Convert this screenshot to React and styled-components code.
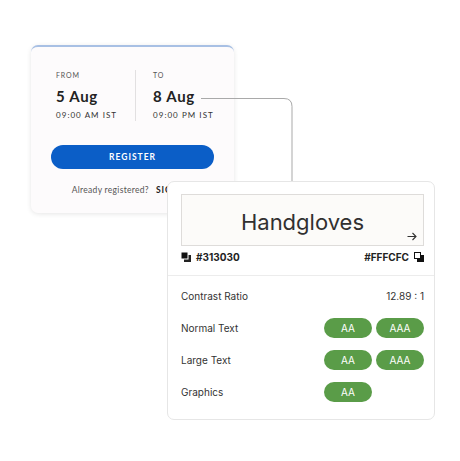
import React from 'react'
import styled, { createGlobalStyle } from 'styled-components'

const Global = createGlobalStyle`
  html, body { margin: 0; padding: 0; background: #ffffff; }
  * { box-sizing: border-box; }
`

const Stage = styled.div`
  position: relative;
  width: 460px;
  height: 461px;
  padding: 45px 0 0 31px;
  font-family: Lato, "Liberation Sans", sans-serif;
  color: #2b2b2b;
`

const EventCard = styled.div`
  width: 203px;
  height: 168px;
  background: #fdfbfc;
  border-top: 2px solid #a8c0e4;
  border-radius: 7px;
  box-shadow: 0 1px 5px rgba(0, 0, 0, 0.1);
  padding: 23px 20px 0 20px;
  display: flex;
  flex-direction: column;
`

const Dates = styled.div`
  display: flex;
  padding-left: 5px;
`

const DateCol = styled.div`
  display: flex;
  flex-direction: column;
  width: ${p => (p.$last ? 'auto' : '79px')};
  padding-left: ${p => (p.$last ? '17px' : '0')};
  border-left: ${p => (p.$last ? '1px solid #e2e0e1' : 'none')};
`

const Label = styled.span`
  font-size: 7px;
  line-height: 10px;
  letter-spacing: 0.9px;
  color: #555;
`

const Day = styled.span`
  margin-top: 7px;
  font-size: 15px;
  line-height: 18px;
  font-weight: 700;
  letter-spacing: 0.7px;
  color: #222;
`

const Time = styled.span`
  margin-top: 5px;
  font-size: 8px;
  line-height: 11px;
  letter-spacing: 1.05px;
  color: #333;
`

const Register = styled.button`
  margin-top: 24px;
  height: 24px;
  width: 163px;
  border: none;
  border-radius: 12px;
  background: #0b5ec7;
  color: #fff;
  font-family: inherit;
  font-size: 8.5px;
  font-weight: 700;
  letter-spacing: 1px;
`

const SignLine = styled.p`
  margin: 15px 0 0;
  text-align: center;
  font-size: 8.5px;
  line-height: 12px;
  color: #555;
  letter-spacing: 0.3px;
  b { margin-left: 7px; color: #222; letter-spacing: 0.9px; }
`

const Connector = styled.svg`
  position: absolute;
  left: 0;
  top: 0;
  pointer-events: none;
`

const ContrastCard = styled.div`
  position: absolute;
  left: 167px;
  top: 181px;
  width: 268px;
  height: 239px;
  background: #fff;
  border: 1px solid #e6e6e6;
  border-radius: 7px;
  font-family: Inter, "Liberation Sans", sans-serif;
  color: #333;
`

const Top = styled.div`
  padding: 12px 10px 11px 13px;
  border-bottom: 1px solid #ececec;
`

const Preview = styled.div`
  position: relative;
  height: 52px;
  padding-top: 3px;
  background: #fcfbf9;
  border: 1px solid #dedcda;
  display: flex;
  align-items: center;
  justify-content: center;
  font-size: 22px;
  color: #313030;
`

const Arrow = styled.svg`
  position: absolute;
  right: 6px;
  bottom: 4px;
`

const Swatches = styled.div`
  margin-top: 4px;
  display: flex;
  justify-content: space-between;
  align-items: center;
  height: 14px;
`

const Swatch = styled.span`
  display: flex;
  align-items: center;
  gap: 5px;
  font-size: 10px;
  font-weight: 700;
  color: #222;
`

const Results = styled.div`
  padding: 10px 10px 0 13px;
  display: flex;
  flex-direction: column;
  gap: 12px;
`

const Row = styled.div`
  height: 20px;
  display: flex;
  align-items: center;
  justify-content: space-between;
  font-size: 10px;
  color: #333;
`

const Pills = styled.div`
  width: 100px;
  display: flex;
  gap: 4px;
`

const Pill = styled.span`
  width: 48px;
  height: 20px;
  border-radius: 10px;
  background: #5a9c48;
  color: #fff;
  font-size: 10px;
  display: flex;
  align-items: center;
  justify-content: center;
`

function DarkIcon() {
  return (
    <svg width="10" height="10" viewBox="0 0 10 10">
      <rect x="3" y="3" width="7" height="7" fill="#222" />
      <rect x="0" y="0" width="7" height="7" fill="#111" stroke="#fff" strokeWidth="1" />
    </svg>
  )
}

function LightIcon() {
  return (
    <svg width="10" height="10" viewBox="0 0 10 10">
      <rect x="3" y="3" width="7" height="7" fill="#111" />
      <rect x="0.5" y="0.5" width="6" height="6" fill="#fff" stroke="#111" strokeWidth="1" />
    </svg>
  )
}

const rows = [
  { label: 'Normal Text', grades: ['AA', 'AAA'] },
  { label: 'Large Text', grades: ['AA', 'AAA'] },
  { label: 'Graphics', grades: ['AA'] },
]

export default function App() {
  return (
    <Stage>
      <Global />
      <EventCard>
        <Dates>
          <DateCol>
            <Label>FROM</Label>
            <Day>5 Aug</Day>
            <Time>09:00 AM IST</Time>
          </DateCol>
          <DateCol $last>
            <Label>TO</Label>
            <Day>8 Aug</Day>
            <Time>09:00 PM IST</Time>
          </DateCol>
        </Dates>
        <Register>REGISTER</Register>
        <SignLine>
          Already registered?<b>SIGN IN</b>
        </SignLine>
      </EventCard>

      <Connector width="460" height="461">
        <path d="M201 98.5 H284 Q292 98.5 292 106.5 V182" fill="none" stroke="#a9a9a9" strokeWidth="1" />
      </Connector>

      <ContrastCard>
        <Top>
          <Preview>
            Handgloves
            <Arrow width="10" height="9" viewBox="0 0 10 9">
              <path d="M0.5 4.5 H9 M5.5 1 L9 4.5 L5.5 8" fill="none" stroke="#333" strokeWidth="1.1" />
            </Arrow>
          </Preview>
          <Swatches>
            <Swatch><DarkIcon />#313030</Swatch>
            <Swatch>#FFFCFC<LightIcon /></Swatch>
          </Swatches>
        </Top>
        <Results>
          <Row>
            <span>Contrast Ratio</span>
            <span>12.89 : 1</span>
          </Row>
          {rows.map(r => (
            <Row key={r.label}>
              <span>{r.label}</span>
              <Pills>
                {r.grades.map(g => <Pill key={g}>{g}</Pill>)}
              </Pills>
            </Row>
          ))}
        </Results>
      </ContrastCard>
    </Stage>
  )
}
